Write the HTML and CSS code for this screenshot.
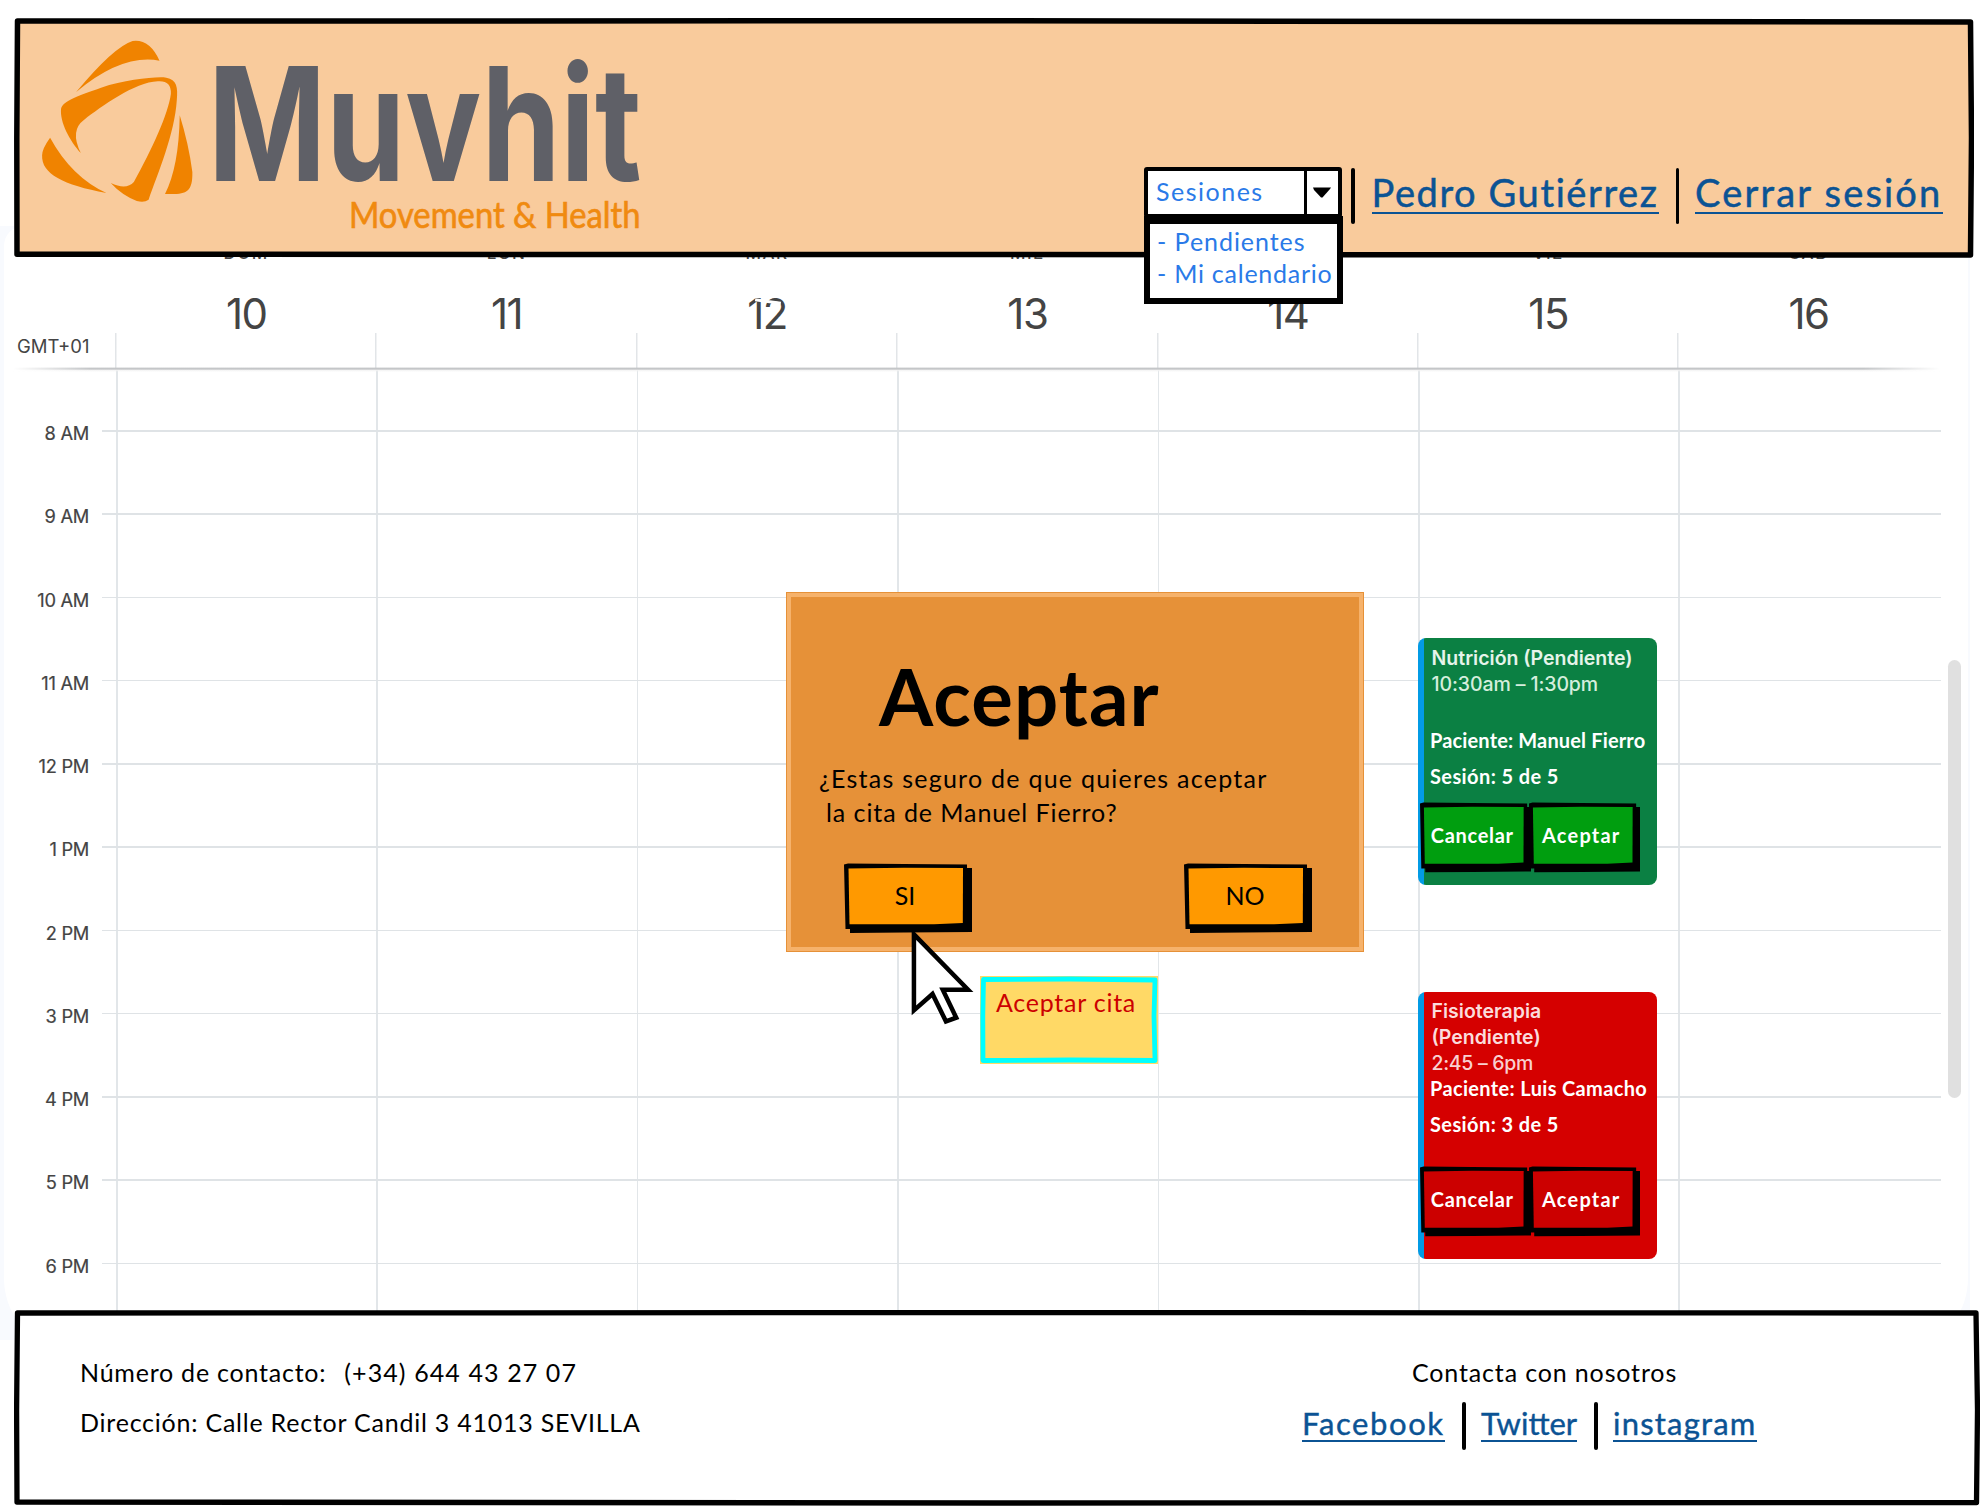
FILE: index.html
```
<!DOCTYPE html>
<html lang="es">
<head>
<meta charset="utf-8">
<title>Muvhit - Mi calendario</title>
<link rel="stylesheet" href="styles.css">
</head>
<body>
<svg class="defs" aria-hidden="true">
  <symbol id="sketch-button" viewBox="0 0 128 70" preserveAspectRatio="none">
    <path d="M6 5H128V69L60 69.5L6 70Z" fill="#000"/>
    <path d="M0 1.5L4 0.5L60 1L123 1.5V64L60 65.5L1.5 66Z" fill="#000"/>
    <path d="M4.5 5.5L60 4.8L119 5L118.8 60L90 61.3L5.5 61.3Z" fill="currentColor"/>
  </symbol>
</svg>

<header class="header">
  <svg class="frame" viewBox="0 0 1960 240" preserveAspectRatio="none">
    <path d="M3.500 3L980 2.800L1956.500 4L1957.500 120L1956.500 237L980 236.500L3 236.300L2.800 120Z" fill="#f9cb9c" stroke="#000" stroke-width="5.500" stroke-linejoin="round"/>
  </svg>
  <svg class="logo" viewBox="95 110 1425.6 580" preserveAspectRatio="none">
    <g fill="#f08300">
      <path d="M181 275Q270 140 315 122Q355 115 379 181Q290 160 181 275Z"/>
      <path d="M192 458C165 420 142 365 145 325C150 300 190 285 240 262C300 238 370 228 395 232C420 238 423 260 420 300C415 400 375 520 353 598Q343 608 325 602Q290 585 263 548Q300 570 318 545C360 450 400 340 406 280Q407 240 375 243C320 245 240 320 200 358Q165 390 192 458Z"/>
      <path d="M119 412Q100 445 100 465C98 520 150 555 253 578Q170 530 119 412Z"/>
      <path d="M427 345Q448 430 457 515C458 580 440 583 392 581Q425 500 427 345Z"/>
    </g>
    <text class="logo-name" x="494" y="543" textLength="1030" lengthAdjust="spacingAndGlyphs">Muvhit</text>
    <text class="logo-tag" x="829" y="682" textLength="693" lengthAdjust="spacingAndGlyphs">Movement &amp; Health</text>
  </svg>
  <nav class="nav">
    <div class="select">
      <div class="select-box">
        <span class="select-value">Sesiones</span>
        <span class="select-arrow"><svg width="19" height="11" viewBox="0 0 19 11"><path d="M0 .5H18L17 2L9.500 10.500L8 10.500L1 3Z"/></svg></span>
      </div>
      <ul class="select-list">
        <li class="opt-a">- Pendientes</li>
        <li class="opt-b">- Mi calendario</li>
      </ul>
    </div>
    <i class="bar"></i>
    <a class="nav-link user">Pedro Gutiérrez</a>
    <i class="bar"></i>
    <a class="nav-link logout">Cerrar sesión</a>
  </nav>
</header>

<main class="board">
  <div class="card">
    <div class="days">
      <div class="zone">GMT+01</div>
      <div class="day"><small>DOM</small><b>10</b></div>
      <div class="day"><small>LUN</small><b>11</b></div>
      <div class="day"><small>MAR</small><b class="worn">12</b></div>
      <div class="day"><small>MIÉ</small><b>13</b></div>
      <div class="day"><small></small><b>14</b></div>
      <div class="day"><small>VIE</small><b>15</b></div>
      <div class="day"><small>SÁB</small><b>16</b></div>
    </div>
    <div class="hours">
      <div class="hour"><span>8 AM</span></div>
      <div class="hour"><span>9 AM</span></div>
      <div class="hour"><span>10 AM</span></div>
      <div class="hour"><span>11 AM</span></div>
      <div class="hour"><span>12 PM</span></div>
      <div class="hour"><span>1 PM</span></div>
      <div class="hour"><span>2 PM</span></div>
      <div class="hour"><span>3 PM</span></div>
      <div class="hour"><span>4 PM</span></div>
      <div class="hour"><span>5 PM</span></div>
      <div class="hour"><span>6 PM</span></div>
    </div>
  </div>
  <div class="scrollbar"></div>

  <article class="event nutrition">
    <h3>Nutrición (Pendiente)</h3>
    <time>10:30am – 1:30pm</time>
    <p class="patient">Paciente: Manuel Fierro</p>
    <p class="session">Sesión: 5 de 5</p>
    <div class="event-actions">
      <button class="btn"><svg><use href="#sketch-button"/></svg><span class="cancel">Cancelar</span></button>
      <button class="btn"><svg><use href="#sketch-button"/></svg><span class="accept">Aceptar</span></button>
    </div>
  </article>

  <article class="event physio">
    <h3>Fisioterapia<br>(Pendiente)</h3>
    <time>2:45 – 6pm</time>
    <p class="patient">Paciente: Luis Camacho</p>
    <p class="session">Sesión: 3 de 5</p>
    <div class="event-actions">
      <button class="btn"><svg><use href="#sketch-button"/></svg><span class="cancel">Cancelar</span></button>
      <button class="btn"><svg><use href="#sketch-button"/></svg><span class="accept">Aceptar</span></button>
    </div>
  </article>
</main>

<section class="modal">
  <h1>Aceptar</h1>
  <p class="ask-a">¿Estas seguro de que quieres aceptar</p>
  <p class="ask-b">la cita de Manuel Fierro?</p>
  <div class="modal-actions">
    <button class="btn"><svg><use href="#sketch-button"/></svg><span>SI</span></button>
    <button class="btn"><svg><use href="#sketch-button"/></svg><span>NO</span></button>
  </div>
</section>

<aside class="note">
  <svg class="frame" viewBox="0 0 178 88" preserveAspectRatio="none"><path d="M3.500 3.500L90 3L175 4L174 40L175 84.500L90 84L3 84.500L2.800 40Z" fill="none" stroke="#0ff" stroke-width="4.800" stroke-linejoin="round"/></svg>
  <span>Aceptar cita</span>
</aside>

<svg class="cursor" viewBox="350 1045 170 300" preserveAspectRatio="none">
  <path d="M365 1064V1292L412 1243L446 1325L472 1314L438 1230H502Z"/>
</svg>

<footer class="footer">
  <svg class="frame" viewBox="0 0 1966 196" preserveAspectRatio="none">
    <path d="M3.500 3L980 2.600L1962 3L1963.500 100L1962.500 192.500L980 193L3 192L2.600 100Z" fill="#fff" stroke="#000" stroke-width="5.300" stroke-linejoin="round"/>
  </svg>
  <div class="contact">
    <p><span class="label">Número de contacto:</span><span class="phone">(+34) 644 43 27 07</span></p>
    <p class="address">Dirección: Calle Rector Candil 3 41013 SEVILLA</p>
  </div>
  <div class="social">
    <p>Contacta con nosotros</p>
    <div class="social-links">
      <a class="facebook">Facebook</a><i class="bar"></i><a class="twitter">Twitter</a><i class="bar"></i><a class="instagram">instagram</a>
    </div>
  </div>
</footer>
</body>
</html>
```
FILE: styles.css
```
* { box-sizing: border-box; }
body {
  position: relative;
  margin: 0;
  width: 1980px;
  height: 1506px;
  overflow: hidden;
  background: #fff;
  color: #000;
  font-family: "Lato", sans-serif;
  font-size: 25px;
}
h1, h3, p, ul { margin: 0; padding: 0; font-weight: 400; }
li { list-style: none; }
.defs { position: absolute; width: 0; height: 0; }
.frame { position: absolute; inset: 0; width: 100%; height: 100%; }

/* Header */
.header {
  position: relative;
  z-index: 2;
  display: flex;
  justify-content: space-between;
  width: 1960px;
  height: 240px;
  margin: 18px 0 0 14px;
  padding-right: 31px;
}
.logo { position: relative; width: 600px; height: 193.3px; margin: 18.7px 0 0 26px; overflow: visible; }
.logo-name { font: 700 476px "Inter", sans-serif; fill: #5f6067; }
.logo-tag { font: 400 110px "Lato", sans-serif; fill: #f08a10; stroke: #f08a10; stroke-width: 2; }
.nav { position: relative; display: flex; align-items: flex-start; margin-top: 149px; }
.select { position: relative; width: 198px; color: #2a7ae8; }
.select-box {
  display: flex;
  height: 51px;
  border: 4px solid #000;
  border-radius: 3px;
  background: #fff;
  line-height: 41px;
}
.select-value { flex: 1; padding-left: 8px; letter-spacing: 1.5px; }
.select-arrow { display: flex; align-items: center; justify-content: center; width: 34px; border-left: 3px solid #000; }
.select-list {
  position: absolute;
  top: 49px;
  left: 0;
  width: 199px;
  height: 88px;
  padding: 1px 0 0 7px;
  border: 6px solid #000;
  border-top-width: 8px;
  background: #fff;
  line-height: 32px;
  white-space: nowrap;
}
.opt-a { letter-spacing: .95px; }
.opt-b { letter-spacing: .75px; }
.bar { width: 3.5px; background: #000; border-radius: 2px; }
.nav .bar { height: 56px; margin: 1px 16px 0 17px; }
.nav .select + .bar { margin: 1px 17px 0 9px; }
.nav-link {
  padding-top: 5.2px;
  border-bottom: 2.5px solid #0b5394;
  color: #0b5394;
  font-size: 38px;
  line-height: 40px;
  white-space: nowrap;
  -webkit-text-stroke: .5px #0b5394;
}
.user { width: 287px; letter-spacing: 1.6px; }
.logout { width: 248px; letter-spacing: 2.2px; }

/* Calendar */
.board {
  position: relative;
  z-index: 1;
  width: 1970px;
  height: 1114px;
  margin: -32px 0 -30px;
  padding: 0 2px 0 4px;
  background: #f8fafe;
  font-family: "Inter", sans-serif;
}
.card { height: 1114px; padding-left: 1px; border-radius: 20px 20px 50px 50px / 20px 20px 62px 62px; background: #fff; overflow: hidden; }
.days {
  position: relative;
  display: grid;
  grid-template-columns: 110px repeat(7, 260.4px);
  height: 142px;
  color: #444;
}
.days::after {
  content: "";
  position: absolute;
  left: 8px;
  right: 28px;
  bottom: -4px;
  height: 5px;
  background: linear-gradient(to bottom, transparent, #c4c6c8 25% 45%, #f2f2f2 60%, transparent);
  mask-image: linear-gradient(to right, transparent, #000 4%, #000 96%, transparent);
}
.zone { align-self: end; padding-left: 12px; font-size: 18.5px; line-height: 20px; margin-bottom: 12.500px; }
.day {
  display: flex;
  flex-direction: column;
  align-items: center;
  padding: 17px 0 0 2px;
  background: linear-gradient(#e2e5e8, #e2e5e8) left bottom / 1.5px 35px no-repeat;
}
.day small { height: 20px; font-size: 17px; font-weight: 500; line-height: 20px; letter-spacing: 1.5px; }
.day b { position: relative; margin-top: 25.500px; font-weight: 400; font-size: 42px; line-height: 50px; letter-spacing: -1.5px; }
.worn::after { content: ""; position: absolute; left: 8px; right: 6px; top: 11px; height: 3px; background: #fff; transform: rotate(8deg); }
.hours {
  height: 972px;
  padding-top: 62px;
  background: repeating-linear-gradient(to right, #e2e6e9 0 1.5px, transparent 1.5px 260.4px) 111px 0 / 1566px 100% no-repeat;
}
.hour { display: flex; align-items: flex-start; height: 83.25px; color: #444; font-size: 18.3px; line-height: 20px; letter-spacing: -.3px; }
.hour::after { content: ""; flex: 1; margin-right: 27px; height: 1.5px; background: #dfe3e6; }
.hour span { width: 97px; padding-right: 13px; margin-top: -7px; text-align: right; -webkit-text-stroke: .2px #444; }
.scrollbar { position: absolute; left: 1947.5px; top: 434px; width: 13.500px; height: 438px; border-radius: 7px; background: #e0e0e0; }

.event {
  position: absolute;
  left: 1418px;
  width: 239px;
  padding-left: 13.500px;
  border-radius: 8px;
  color: #fff;
  font-size: 20px;
  white-space: nowrap;
}
.event h3 { font-weight: 600; font-size: 19.5px; line-height: 26px; color: #e6f4ea; }
.event time { display: block; font-size: 19.5px; font-weight: 500; line-height: 26px; color: #d5eedd; letter-spacing: -.1px; }
.event p { margin-left: -1.500px; font-family: "Lato", sans-serif; font-weight: 700; line-height: 24px; }
.nutrition { top: 412px; height: 247px; color: #fff; background: linear-gradient(to right, #039be5 6.5px, #0b8043 6.5px); }
.nutrition h3 { padding-top: 6.5px; }
.nutrition .patient { margin-top: 31px; letter-spacing: .15px; }
.nutrition .session { margin-top: 12px; letter-spacing: .4px; }
.physio { top: 765.5px; height: 267.5px; background: linear-gradient(to right, #039be5 6.5px, #d50000 6.5px); }
.physio h3 { padding-top: 6.5px; color: #fbdcdc; }
.physio time { color: #f9d0d0; letter-spacing: -.3px; }
.physio .patient { margin-top: 0; letter-spacing: .35px; }
.physio .session { margin-top: 12px; letter-spacing: .4px; }
.event-actions { display: flex; margin: 14.500px 0 0 -12px; }
.physio .event-actions { margin-top: 30px; }

.btn { position: relative; flex: none; padding: 0; border: 0; background: none; font-family: "Lato", sans-serif; }
.btn svg { position: absolute; inset: 0; width: 100%; height: 100%; }
.btn span { position: relative; }
.event .btn { width: 111.5px; height: 70.5px; padding: 0 6px 4px 0; color: #009e0f; font-size: 20px; font-weight: 700; }
.event .btn + .btn { margin-left: -2.500px; }
.event .btn span { color: #fff; }
.physio .btn { color: #c00; }
.cancel { letter-spacing: .7px; }
.accept { letter-spacing: 1.2px; }

/* Confirmation dialog */
.modal {
  position: absolute;
  z-index: 3;
  left: 786px;
  top: 592px;
  width: 578px;
  height: 360px;
  padding: 57px 0 0 28px;
  border: 5px solid #f6b26b;
  outline: 1.5px solid #e69138;
  outline-offset: -1.500px;
  background: #e69138;
  white-space: nowrap;
}
.modal h1 { margin: 2px 0 0 60px; font-weight: 700; font-size: 78px; line-height: 80px; letter-spacing: 1.1px; }
.modal p { line-height: 34px; }
.ask-a { padding-top: 25px; letter-spacing: 1.25px; }
.ask-b { padding-left: 7px; letter-spacing: .93px; }
.modal-actions { display: flex; justify-content: space-between; width: 468px; margin: 34px 0 0 25px; }
.modal .btn { width: 128px; height: 70px; padding: 0 6px 6px 0; color: #f90; font-size: 25px; }
.modal .btn span { color: #000; }

.note { position: absolute; z-index: 3; left: 980px; top: 976px; width: 178px; height: 88px; padding: 10px 0 0 16px; background: #ffd966; color: #c00; line-height: 32px; letter-spacing: .75px; }
.note span { position: relative; }
.cursor { position: absolute; z-index: 4; left: 908.4px; top: 928.3px; width: 67.2px; height: 100px; }
.cursor path { fill: #fff; stroke: #000; stroke-width: 4.500px; vector-effect: non-scaling-stroke; }

/* Footer */
.footer { position: relative; z-index: 2; display: flex; width: 1966px; height: 196px; margin-left: 14px; padding-top: 37px; }
.contact { position: relative; width: 1288px; padding-left: 66px; line-height: 50px; letter-spacing: .77px; }
.phone { margin-left: 18px; letter-spacing: 1.1px; }
.social { position: relative; }
.social p { margin-left: 110px; line-height: 50px; letter-spacing: .85px; }
.social-links { display: flex; align-items: flex-start; margin-top: 5px; }
.social-links a { padding-top: 4.500px; border-bottom: 2px solid #0b5394; color: #0b5394; font-size: 31px; line-height: 33px; -webkit-text-stroke: .4px #0b5394; }
.social-links .bar { height: 48px; margin: 0 15.500px 0 17px; }
.facebook { width: 143px; letter-spacing: 1.6px; }
.twitter { width: 96px; }
.instagram { width: 143.5px; letter-spacing: 1.2px; }
```
